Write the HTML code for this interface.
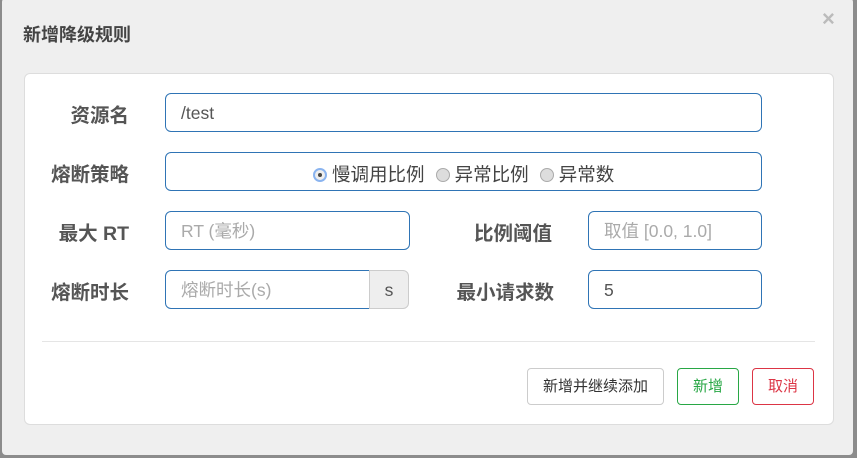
<!DOCTYPE html><html><head><meta charset="utf-8"><style>
body{margin:0;width:857px;height:458px;background:#8c8c8c;position:relative;overflow:hidden;font-family:"Liberation Sans","Noto Sans CJK SC",sans-serif}
.modal{position:absolute;left:2px;top:-2px;width:851px;height:457px;background:#efefef;border-radius:4px}
.t{position:absolute;left:23px;top:21px;font-size:18px;font-weight:bold;color:#444}
.x{position:absolute;left:822px;top:6px;font-size:22px;color:#bbb;font-weight:bold}
.card{position:absolute;left:24px;top:73px;width:808px;height:350px;background:#fff;border:1px solid #ddd;border-radius:6px}
.l{position:absolute;font-size:19.5px;font-weight:bold;color:#555;text-align:right;line-height:46px}
.i{position:absolute;box-sizing:border-box;border:1px solid #2f74b5;border-radius:6px;height:39px;font-size:17.5px;color:#555;line-height:38px;padding-left:15px}
.ph{color:#aaa}
.btn{position:absolute;top:368px;height:37px;box-sizing:border-box;border:1px solid #ccc;border-radius:4px;font-size:15px;line-height:35px;text-align:center;background:#fff}
.r{display:inline-block;width:14px;height:14px;border-radius:50%;background:#ddd;border:1px solid #aaa;vertical-align:-1px;margin-right:5px;box-sizing:border-box}
</style></head><body>
<div class="modal"></div>
<div class="t">新增降级规则</div>
<div class="x">×</div>
<div class="card"></div>
<div class="l" style="left:40px;width:89px;top:93px">资源名</div>
<div class="i" style="left:165px;top:93px;width:597px">/test</div>
<div class="l" style="left:40px;width:89px;top:152px">熔断策略</div>
<div class="i" style="left:165px;top:152px;width:597px;padding-left:147px;font-size:18.5px;line-height:44px;color:#444"><span class="r" style="background:#eee;border:2px solid #8ab4f0;position:relative"><span style="position:absolute;left:3px;top:3px;width:4px;height:4px;border-radius:50%;background:#444"></span></span>慢调用比例 <span class="r" style="margin-left:6px"></span>异常比例 <span class="r" style="margin-left:6px"></span>异常数</div>
<div class="l" style="left:40px;width:89px;top:211px">最大 RT</div>
<div class="i ph" style="left:165px;top:211px;width:245px">RT (毫秒)</div>
<div class="l" style="left:440px;width:112px;top:211px">比例阈值</div>
<div class="i ph" style="left:588px;top:211px;width:174px">取值 [0.0, 1.0]</div>
<div class="l" style="left:40px;width:89px;top:270px">熔断时长</div>
<div class="i ph" style="left:165px;top:270px;width:205px;border-radius:6px 0 0 6px">熔断时长(s)</div>
<div class="i" style="left:369px;top:270px;width:40px;border-color:#ccc;background:#eee;border-radius:0 6px 6px 0;padding:0;text-align:center">s</div>
<div class="l" style="left:440px;width:114px;top:270px">最小请求数</div>
<div class="i" style="left:588px;top:270px;width:174px">5</div>
<div style="position:absolute;left:42px;top:341px;width:773px;height:1px;background:#e5e5e5"></div>
<div class="btn" style="left:527px;width:137px;color:#333">新增并继续添加</div>
<div class="btn" style="left:677px;width:62px;border-color:#28a745;color:#28a745">新增</div>
<div class="btn" style="left:752px;width:62px;border-color:#dc3545;color:#dc3545">取消</div>
</body></html>
